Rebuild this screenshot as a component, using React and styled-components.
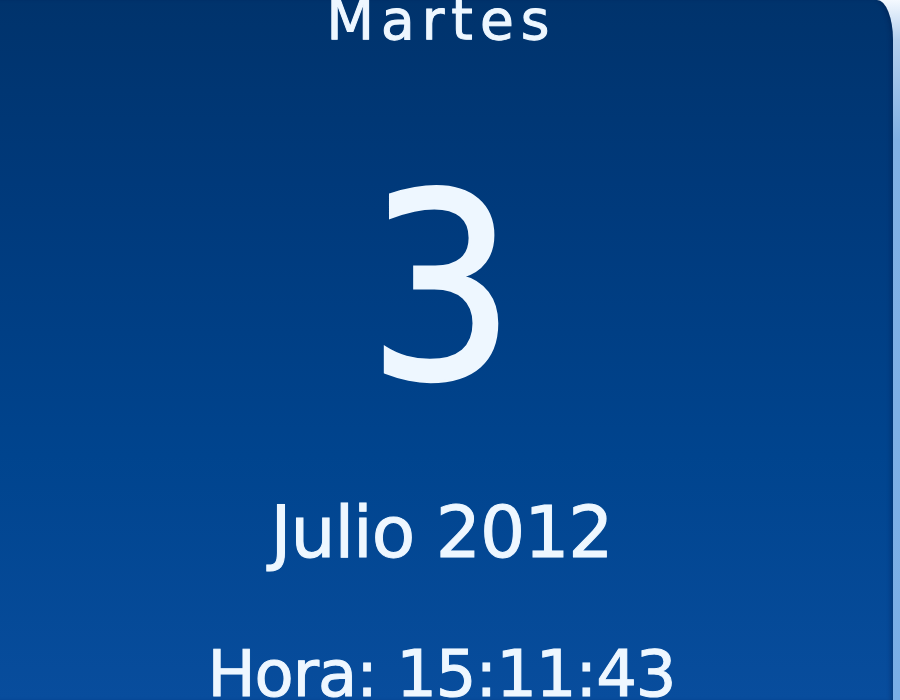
import React from "react";
import styled, { createGlobalStyle } from "styled-components";

const Global = createGlobalStyle`
  html, body { margin: 0; padding: 0; }
  body { width: 900px; height: 700px; overflow: hidden; font-family: "DejaVu Sans", "Liberation Sans", sans-serif; }
  #root { width: 900px; height: 700px; }
`;

const Frame = styled.div`
  width: 900px;
  height: 700px;
  display: flex;
  background: linear-gradient(180deg, #f4f9ff 0px, #b4d0ee 40px, #80b0e4 140px, #7aaee6 700px);
  overflow: hidden;
`;

const Panel = styled.div`
  width: 893px;
  height: 700px;
  box-sizing: border-box;
  padding-right: 10px;
  border-top-right-radius: 16px 40px;
  background: linear-gradient(180deg, #00336c 0%, #003a7c 30%, #00448e 65%, #084d9d 100%);
  box-shadow: inset -4px 0 4px -2px rgba(0, 20, 60, 0.35);
  display: flex;
  flex-direction: column;
  align-items: center;
  color: #eef7ff;
`;

const Line = styled.div`
  font-family: ${(p) => (p.$condensed ? '"DejaVu Sans Condensed", "DejaVu Sans", sans-serif' : "inherit")};
  font-size: ${(p) => p.$size}px;
  line-height: 1;
  letter-spacing: ${(p) => p.$spacing || 0}px;
  margin-top: ${(p) => p.$top}px;
  white-space: nowrap;
  -webkit-text-stroke: ${(p) => p.$stroke || 1}px #eef7ff;
  text-shadow: 0 0 1px rgba(180, 220, 255, 0.6);
`;

export default function App() {
  return (
    <>
      <Global />
      <Frame>
        <Panel>
          <Line $size={55} $top={-7} $spacing={7}>Martes</Line>
          <Line $size={258} $top={112} $condensed $stroke={3}>3</Line>
          <Line $size={71} $top={79} $spacing={-1}>Julio 2012</Line>
          <Line $size={64} $top={74} $spacing={-1}>Hora: 15:11:43</Line>
        </Panel>
      </Frame>
    </>
  );
}
